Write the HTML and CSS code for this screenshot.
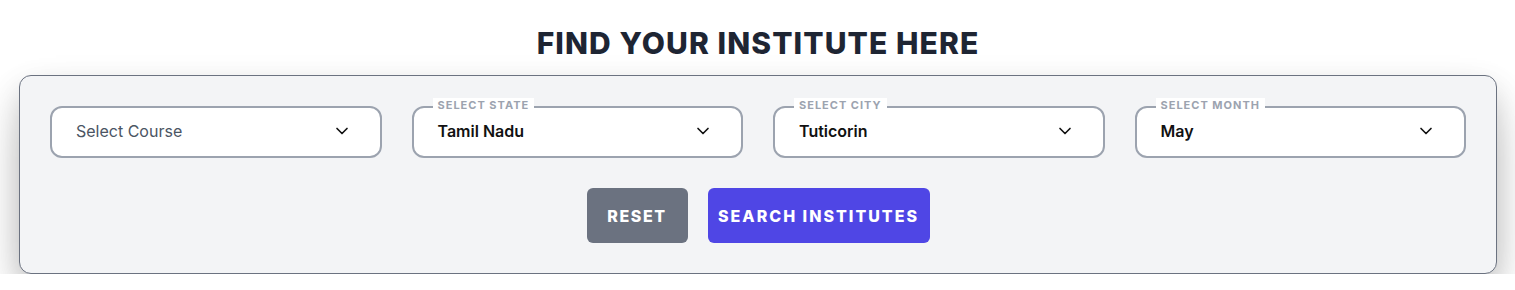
FILE: index.html
```html
<!DOCTYPE html>
<html lang="en">
<head>
    <meta charset="UTF-8">
    <meta name="viewport" content="width=device-width, initial-scale=1.0">
    <title>Find Your Institute</title>
    <link rel="stylesheet" href="styles.css">
</head>
<body>
    <section class="finder">
        <h2 class="title">FIND YOUR INSTITUTE HERE</h2>
        <div class="card">
            <div class="fields">
                <div class="field">
                    <span class="value placeholder">Select Course</span>
                    <svg class="chev" viewBox="0 0 24 24"><path d="M6 9l6 6 6-6"/></svg>
                </div>
                <div class="field">
                    <span class="label">SELECT STATE</span>
                    <span class="value">Tamil Nadu</span>
                    <svg class="chev" viewBox="0 0 24 24"><path d="M6 9l6 6 6-6"/></svg>
                </div>
                <div class="field">
                    <span class="label">SELECT CITY</span>
                    <span class="value">Tuticorin</span>
                    <svg class="chev" viewBox="0 0 24 24"><path d="M6 9l6 6 6-6"/></svg>
                </div>
                <div class="field">
                    <span class="label">SELECT MONTH</span>
                    <span class="value">May</span>
                    <svg class="chev" viewBox="0 0 24 24"><path d="M6 9l6 6 6-6"/></svg>
                </div>
            </div>
            <div class="actions">
                <button class="btn reset">RESET</button>
                <button class="btn search">SEARCH INSTITUTES</button>
            </div>
        </div>
    </section>
</body>
</html>
```

FILE: styles.css
```css
*{
    margin: 0;
    padding: 0;
    box-sizing: border-box;
}
body{
    background-color: #ffffff;
    font-family: "Inter", "Noto Sans", sans-serif;
}
.finder{
    padding: 26px 18px 0 19px;
}
.title{
    text-align: center;
    font-size: 30px;
    font-weight: 800;
    color: #1e2533;
    line-height: 34px;
    letter-spacing: 1.1px;
    margin-bottom: 15px;
}
.card{
    background-color: #f3f4f6;
    border: 1px solid #6b7280;
    border-radius: 12px;
    padding: 30px 30px 30px 30px;
    box-shadow: 0 25px 50px -12px rgba(0, 0, 0, 0.3), 0 14px 30px rgba(0, 0, 0, 0.14);
}
.fields{
    display: grid;
    grid-template-columns: repeat(4, 1fr);
    gap: 30px;
}
.field{
    position: relative;
    height: 52px;
    background-color: #ffffff;
    border: 2px solid #9ca3af;
    border-radius: 12px;
    display: flex;
    align-items: center;
    justify-content: space-between;
    padding: 0 28px 2px 24px;
}
.label{
    position: absolute;
    top: -10px;
    left: 19px;
    padding: 0 5px;
    background-color: #ffffff;
    font-size: 11px;
    line-height: 14px;
    font-weight: 700;
    letter-spacing: 1px;
    color: #9ca3af;
}
.value{
    font-size: 16px;
    font-weight: 600;
    color: #111111;
}
.placeholder{
    font-weight: 400;
    color: #4b5563;
}
.chev{
    width: 20px;
    height: 20px;
    fill: none;
    stroke: #111111;
    stroke-width: 2;
    stroke-linecap: round;
    stroke-linejoin: round;
}
.actions{
    display: flex;
    justify-content: center;
    gap: 20px;
    margin-top: 30px;
}
.btn{
    height: 55px;
    border: 0;
    border-radius: 6px;
    color: #ffffff;
    font-family: "Inter", "Noto Sans", sans-serif;
    font-size: 16px;
    font-weight: 800;
    letter-spacing: 1.6px;
    white-space: nowrap;
    padding: 0;
}
.reset{
    background-color: #6b7280;
    width: 101px;
}
.search{
    background-color: #4f46e5;
    width: 222px;
    letter-spacing: 2px;
}
```
